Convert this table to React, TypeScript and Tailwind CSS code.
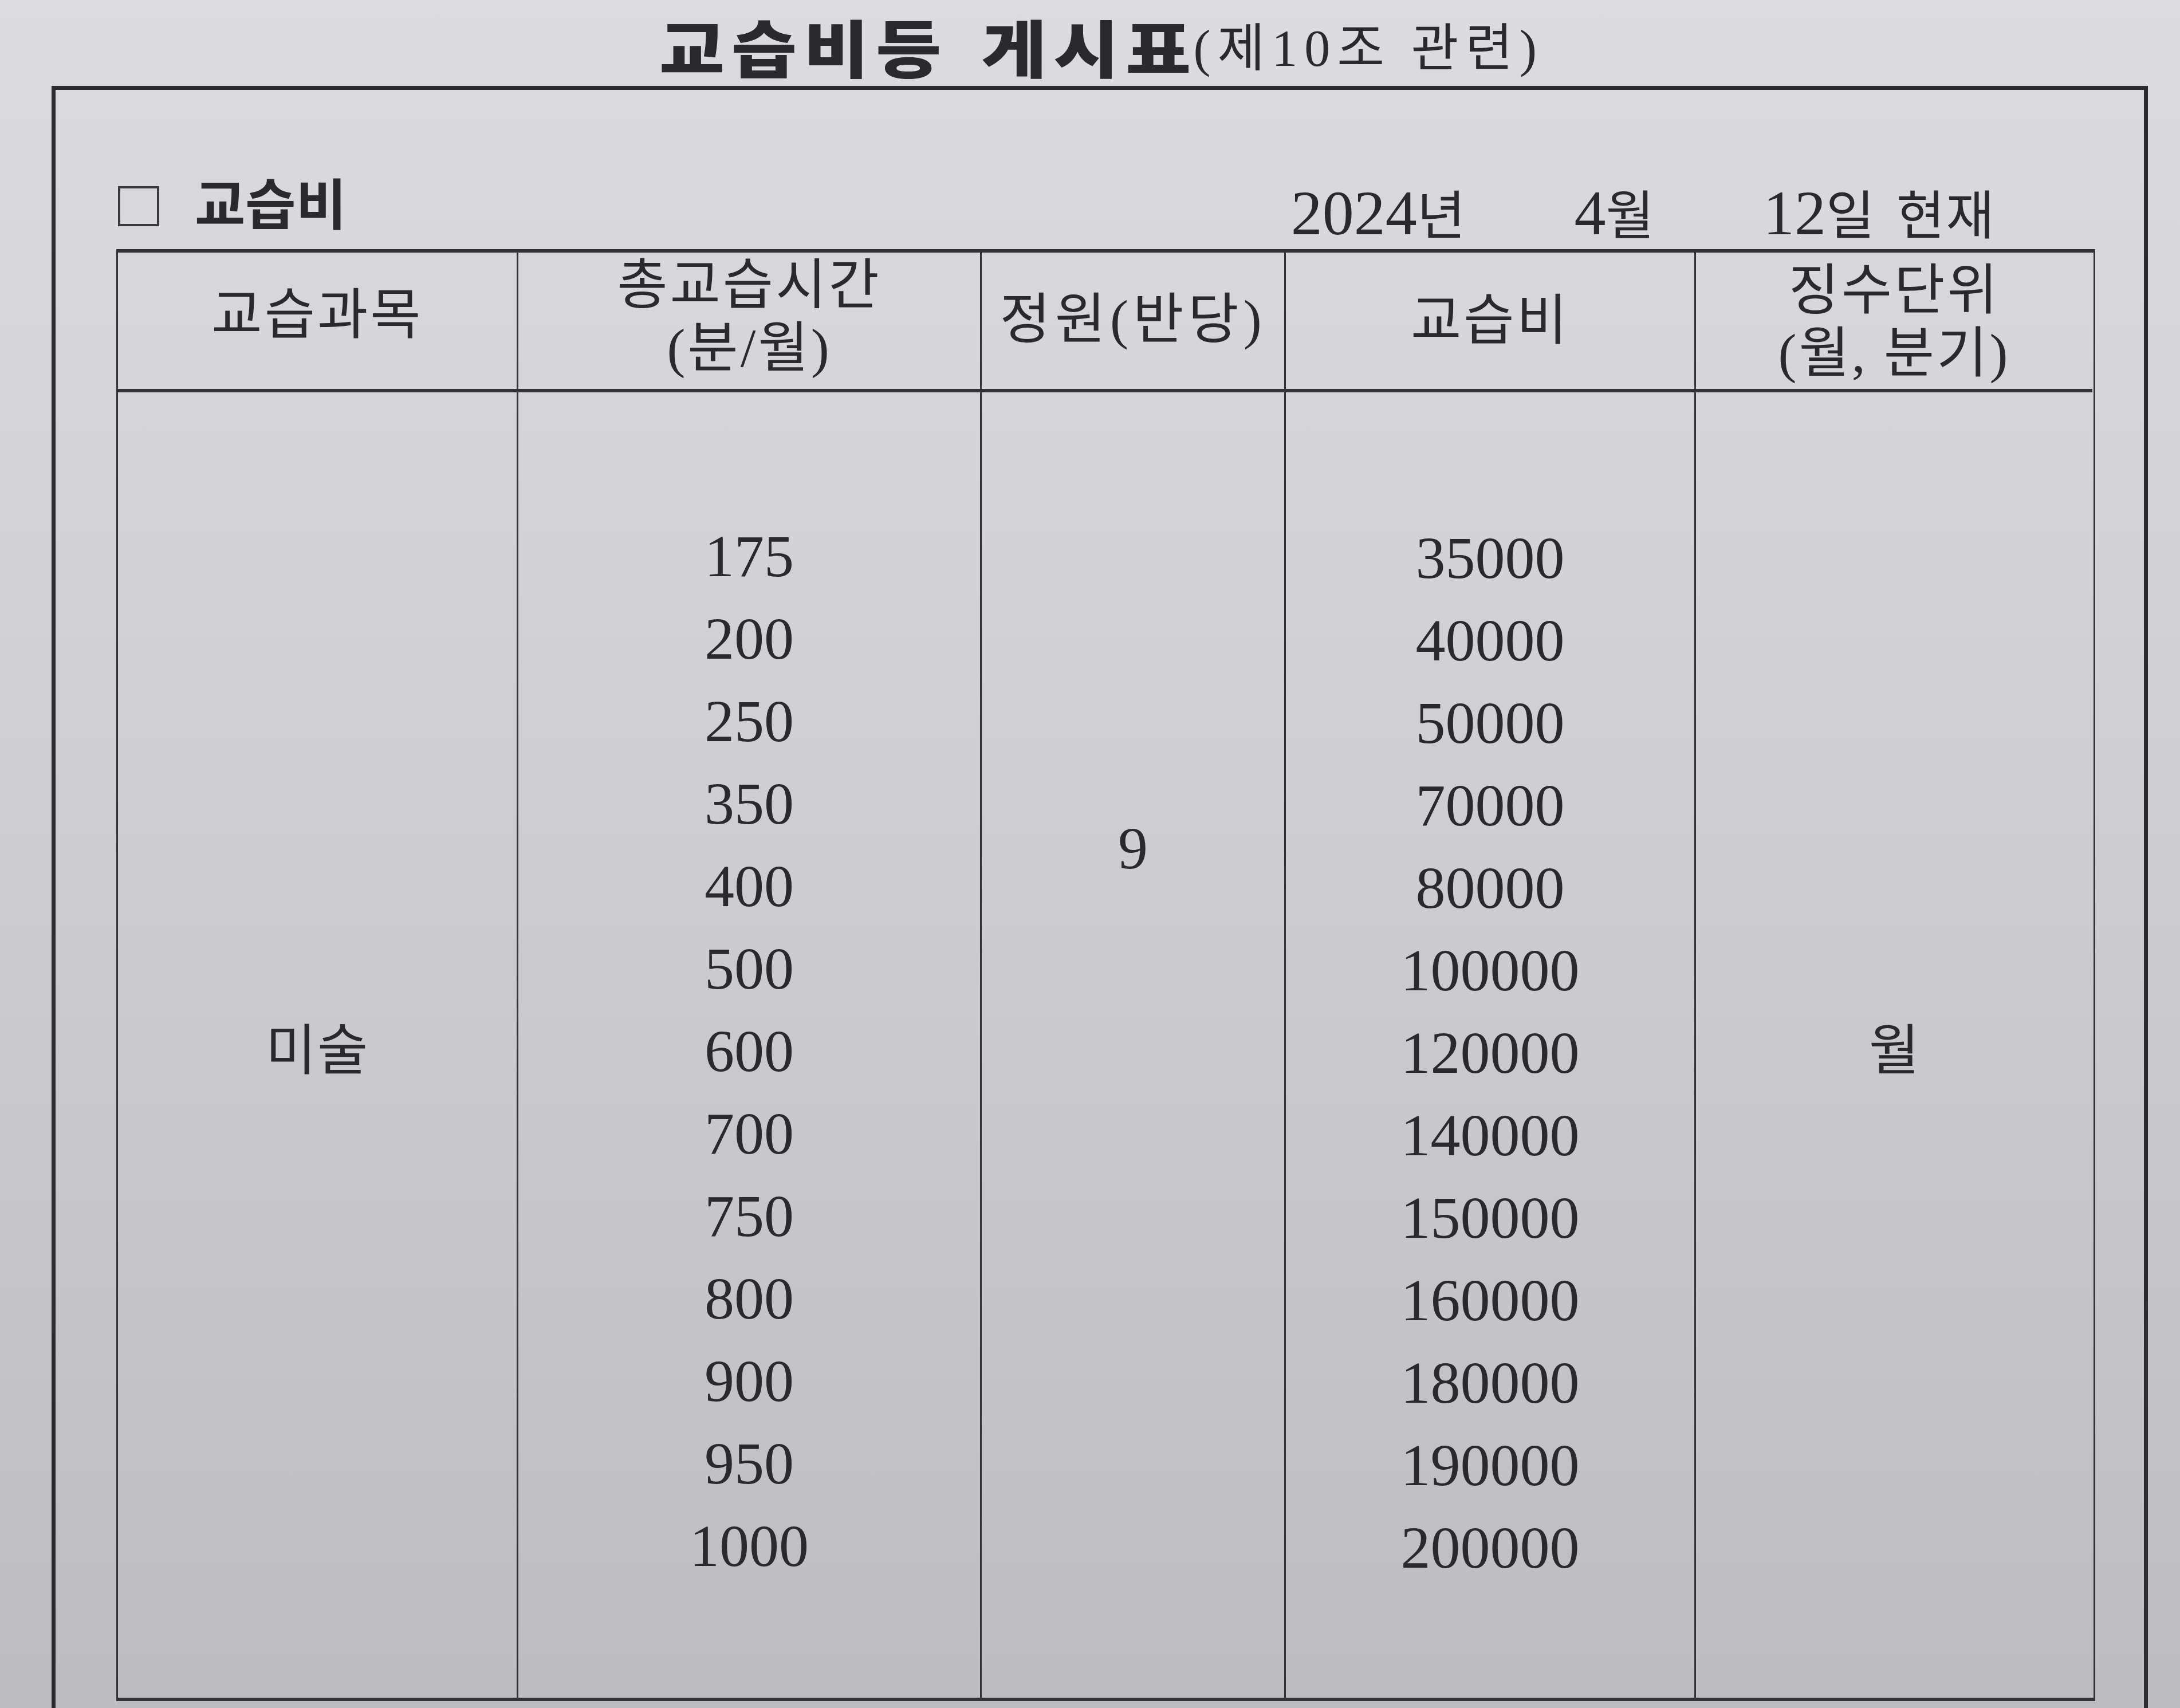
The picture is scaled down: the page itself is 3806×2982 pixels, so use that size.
import React from 'react';

const times = ['175', '200', '250', '350', '400', '500', '600', '700', '750', '800', '900', '950', '1000'];
const fees = ['35000', '40000', '50000', '70000', '80000', '100000', '120000', '140000', '150000', '160000', '180000', '190000', '200000'];

const serif = "font-['Liberation_Serif','Noto_Sans_CJK_KR',serif]";

const App: React.FC = () => {
  return (
    <div
      className={`w-[3806px] h-[2982px] overflow-hidden text-[#2a2a2e] ${serif} bg-[linear-gradient(180deg,#dcdcde_0%,#cfcfd1_45%,#bdbdbf_100%)]`}
    >
      {/* title */}
      <div className="h-[150px] flex items-start justify-center pl-[40px]">
        <span className="font-['Noto_Sans_CJK_KR',sans-serif] font-black text-[124px] leading-[180px] tracking-[12px] scale-y-[0.88] origin-top">
          교습비등
        </span>
        <span className="ml-[58px] font-['Noto_Sans_CJK_KR',sans-serif] font-black text-[124px] leading-[180px] tracking-[12px] scale-y-[0.88] origin-top">
          게시표
        </span>
        <span className="ml-[-8px] mt-[30px] text-[90px] leading-[110px] tracking-[12px]">(제10조 관련)</span>
      </div>

      {/* outer frame */}
      <div className="ml-[90px] w-[3660px] h-[2900px] border-[7px] border-b-0 border-[#2c2c30]">
        <div className="pt-[153px] pl-[109px] pr-[259px] h-[253px] flex items-center">
          <div className="w-[72px] h-[70px] border-[4px] border-[#3a3a3e]" />
          <span className="ml-[62px] text-[96px] leading-none font-bold">교습비</span>
          <div className="ml-auto flex items-baseline leading-none mt-[24px]">
            <span className="text-[110px]">2024</span>
            <span className="text-[92px]">년</span>
            <span className="ml-[190px] text-[110px]">4</span>
            <span className="text-[92px]">월</span>
            <span className="ml-[190px] text-[110px]">12</span>
            <span className="text-[92px]">일</span>
            <span className="ml-[38px] text-[92px] tracking-[2px]">현재</span>
          </div>
        </div>

        {/* fee table */}
        <div className="mt-[25px] ml-[106px] w-[3455px] border-x-[3px] border-y-[6px] border-[#333337] grid grid-cols-[699px_809px_531px_716px_692px]">
          <div className="h-[244px] border-b-[6px] border-r-[3px] border-[#333337] flex items-center justify-center pb-[20px] text-[96px] tracking-[4px]">
            교습과목
          </div>
          <div className="h-[244px] border-b-[6px] border-r-[3px] border-[#333337] flex flex-col items-center justify-center pb-[14px] text-[96px] leading-[110px] tracking-[4px]">
            <span>총교습시간</span>
            <span>(분/월)</span>
          </div>
          <div className="h-[244px] border-b-[6px] border-r-[3px] border-[#333337] flex items-center justify-center pb-[4px] text-[96px] tracking-[8px]">
            정원(반당)
          </div>
          <div className="h-[244px] border-b-[6px] border-r-[3px] border-[#333337] flex items-center justify-center text-[96px] tracking-[4px]">
            교습비
          </div>
          <div className="h-[244px] border-b-[6px] border-[#333337] flex flex-col items-center justify-center pt-[4px] text-[96px] leading-[110px] tracking-[4px]">
            <span>징수단위</span>
            <span>(월, 분기)</span>
          </div>

          <div className="h-[2279px] border-r-[3px] border-[#333337] flex items-center justify-center pt-[20px] text-[96px] tracking-[2px]">
            미술
          </div>
          <div className="h-[2279px] border-r-[3px] border-[#333337] flex flex-col items-center justify-center pt-[20px] text-[104px]">
            {times.map((t) => (
              <div key={t} className="h-[144px] leading-[144px]">
                {t}
              </div>
            ))}
          </div>
          <div className="h-[2279px] border-r-[3px] border-[#333337] flex flex-col items-center pt-[724px] text-[104px]">
            <div className="h-[144px] leading-[144px]">9</div>
          </div>
          <div className="h-[2279px] border-r-[3px] border-[#333337] flex flex-col items-center justify-center pt-[26px] text-[104px]">
            {fees.map((f) => (
              <div key={f} className="h-[144px] leading-[144px]">
                {f}
              </div>
            ))}
          </div>
          <div className="h-[2279px] flex items-center justify-center pt-[20px] text-[96px]">월</div>
        </div>
      </div>
    </div>
  );
};

export default App;
